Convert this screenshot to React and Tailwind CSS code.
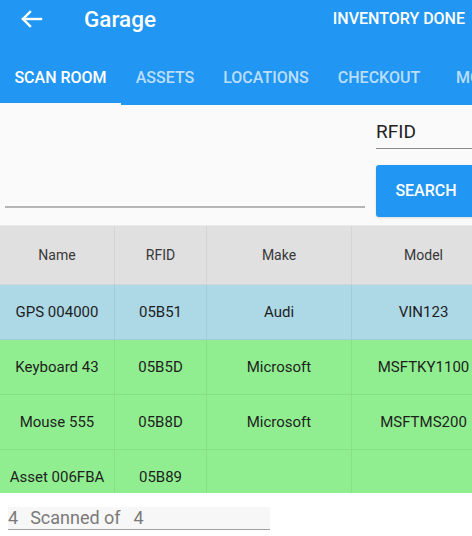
import React from "react";

const tabs = [
  { label: "SCAN ROOM", w: "w-[121px]", active: true },
  { label: "ASSETS", w: "w-[88px]" },
  { label: "LOCATIONS", w: "w-[114px]" },
  { label: "CHECKOUT", w: "w-[112px]" },
  { label: "MORE", w: "w-[86px]" },
];

const rows = [
  { name: "GPS 004000", rfid: "05B51", make: "Audi", model: "VIN123", bg: "bg-[#add8e6]" },
  { name: "Keyboard 43", rfid: "05B5D", make: "Microsoft", model: "MSFTKY1100", bg: "bg-[#90ee90]" },
  { name: "Mouse 555", rfid: "05B8D", make: "Microsoft", model: "MSFTMS200", bg: "bg-[#90ee90]" },
  { name: "Asset 006FBA", rfid: "05B89", make: "", model: "", bg: "bg-[#90ee90]" },
];

const cols = "grid grid-cols-[115px_92px_145px_144px] w-[496px]";

function BackArrow() {
  return (
    <svg width="22" height="18" viewBox="0 0 22 18" fill="none" stroke="white" strokeWidth="2.4" strokeLinecap="square">
      <path d="M2 9H20" />
      <path d="M9 2L2 9L9 16" />
    </svg>
  );
}

export default function App() {
  return (
    <div className="w-[472px] h-[536px] overflow-hidden bg-white font-['Roboto',sans-serif]">
      <div className="bg-[#2196f3] text-white">
        <div className="h-[38px] flex items-center">
          <div className="ml-[21px] flex items-center">
            <BackArrow />
          </div>
          <div className="ml-[41px] text-[22.5px] font-medium leading-none">Garage</div>
          <div className="ml-auto mr-[7px] text-[16px] font-medium leading-none">INVENTORY DONE</div>
        </div>
        <div className="h-[67px] flex items-end overflow-hidden whitespace-nowrap">
          {tabs.map((t) => (
            <div
              key={t.label}
              className={`${t.w} shrink-0 h-[54px] relative flex items-center justify-center text-[16px] font-medium ${
                t.active ? "text-white" : "text-white/70"
              }`}
            >
              {t.label}
              {t.active && <div className="absolute left-0 right-0 bottom-0 h-[2px] bg-[#fafafa]" />}
            </div>
          ))}
        </div>
      </div>

      <div className="h-[120px] bg-[#fafafa] flex">
        <div className="ml-[5px] w-[360px] flex flex-col justify-end pb-[17px]">
          <div className="h-[2px] bg-[#b5b5b5]" />
        </div>
        <div className="ml-[11px] w-[96px] flex flex-col">
          <div className="mt-[12px] h-[32px] border-b border-[#8a8a8a] text-[19px] text-[#222] leading-none flex items-start pt-[5px]">
            RFID
          </div>
          <div className="mt-[16px] h-[52px] w-[100px] bg-[#2196f3] rounded-[3px] shadow-sm flex items-center justify-center text-white text-[16px] font-medium">
            SEARCH
          </div>
        </div>
      </div>

      <div className="h-[268px] overflow-hidden border-t border-[#eaeaea]">
        <div className={`${cols} h-[59px] bg-[#e0e0e0] text-[14px] text-[#383838]`}>
          {["Name", "RFID", "Make", "Model"].map((h) => (
            <div key={h} className="flex items-center justify-center border-r border-b border-black/[0.05]">
              {h}
            </div>
          ))}
        </div>
        {rows.map((r) => (
          <div key={r.name} className={`${cols} h-[55px] ${r.bg} text-[15px] text-[#1e1e1e]`}>
            {[r.name, r.rfid, r.make, r.model].map((v, i) => (
              <div key={i} className="flex items-center justify-center border-r border-b border-black/[0.06] whitespace-nowrap">
                {v}
              </div>
            ))}
          </div>
        ))}
      </div>

      <div className="mt-[14px] ml-[8px] w-[262px] h-[23px] bg-[#f7f7f7] border-b border-[#a0a0a0] flex items-center text-[18px] text-[#7a7a7a] leading-none whitespace-pre">
        <span>4</span>
        <span className="ml-[12px]">Scanned of</span>
        <span className="ml-[13px]">4</span>
      </div>
    </div>
  );
}
